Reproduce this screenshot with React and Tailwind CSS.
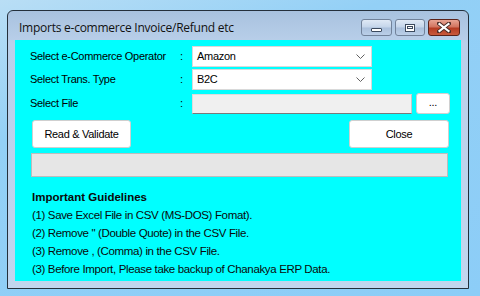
export default function App() {
  const ui = "font-['Liberation_Sans',Arial,sans-serif] text-[11px] text-black tracking-[-0.3px]";
  const lines = [
    '(1) Save Excel File in CSV (MS-DOS) Fomat).',
    '(2) Remove " (Double Quote) in the CSV File.',
    '(3) Remove , (Comma) in the CSV File.',
    '(3) Before Import, Please take backup of Chanakya ERP Data.',
  ];

  return (
    <div className="w-[480px] h-[296px] overflow-hidden bg-[linear-gradient(160deg,#b9def5_0%,#93d0f6_30%,#8ccdf7_100%)] pt-[10px] pl-[7px]">
      {/* Window */}
      <div className="w-[462px] h-[279px] border border-[#24303c] rounded-t-[6px] bg-[linear-gradient(180deg,#a8c2df_0%,#bad0ea_12%,#c1d6ee_100%)] flex flex-col">
        {/* Title bar */}
        <div className="h-[29px] flex items-start pl-[11px] pr-[8px]">
          <span className="mt-[10px] font-['Open_Sans',sans-serif] text-[12px] leading-[14px] text-[#111] tracking-[-0.25px]">
            Imports e-commerce Invoice/Refund etc
          </span>
          <div className="ml-auto mt-[8px] flex gap-[3px]">
            <div className="w-[31px] h-[17px] rounded-[3px] border border-[#71829a] bg-[linear-gradient(180deg,#dfe9f5_0%,#c4d5ea_48%,#aac0dc_52%,#bacfe8_100%)] flex items-center justify-center">
              <div className="w-[11px] h-[4px] mt-[4px] bg-white border border-[#3b4a5e] rounded-[1px]" />
            </div>
            <div className="w-[30px] h-[17px] rounded-[3px] border border-[#71829a] bg-[linear-gradient(180deg,#dfe9f5_0%,#c4d5ea_48%,#aac0dc_52%,#bacfe8_100%)] flex items-center justify-center">
              <div className="w-[10px] h-[8px] border border-[#3b4a5e] bg-white flex items-center justify-center">
                <div className="w-[6px] h-[3px] border border-[#3b4a5e]" />
              </div>
            </div>
            <div className="w-[32px] h-[17px] rounded-[3px] border border-[#5b2219] bg-[linear-gradient(180deg,#e8a493_0%,#d27560_45%,#b53b22_55%,#c85a3c_100%)] flex items-center justify-center">
              <svg width="14" height="11" viewBox="0 0 14 11">
                <path d="M2 1.5 L12 9.5 M12 1.5 L2 9.5" stroke="#4a2b26" strokeWidth="4" strokeLinecap="square" />
                <path d="M2.5 2 L11.5 9 M11.5 2 L2.5 9" stroke="#ffffff" strokeWidth="2.2" strokeLinecap="square" />
              </svg>
            </div>
          </div>
        </div>

        {/* Client area */}
        <div className={`mx-[7px] h-[241px] bg-[#00ffff] pt-[6px] pl-[15px] ${ui}`}>
          <div className="flex items-center h-[21px]">
            <span className="w-[150px]">Select e-Commerce Operator</span>
            <span className="w-[12px]">:</span>
            <div className="w-[180px] h-[21px] bg-white border border-[#d9d9d9] flex items-center pl-[4px] pr-[6px]">
              <span>Amazon</span>
              <svg className="ml-auto" width="9" height="5" viewBox="0 0 9 5">
                <path d="M0.5 0.5 L4.5 4.5 L8.5 0.5" fill="none" stroke="#606060" strokeWidth="1" />
              </svg>
            </div>
          </div>
          <div className="flex items-center h-[21px] mt-[2px]">
            <span className="w-[150px]">Select Trans. Type</span>
            <span className="w-[12px]">:</span>
            <div className="w-[180px] h-[21px] bg-white border border-[#d9d9d9] flex items-center pl-[4px] pr-[6px]">
              <span>B2C</span>
              <svg className="ml-auto" width="9" height="5" viewBox="0 0 9 5">
                <path d="M0.5 0.5 L4.5 4.5 L8.5 0.5" fill="none" stroke="#606060" strokeWidth="1" />
              </svg>
            </div>
          </div>
          <div className="flex items-center h-[21px] mt-[3px]">
            <span className="w-[150px]">Select File</span>
            <span className="w-[12px]">:</span>
            <div className="w-[220px] h-[20px] bg-[#f0f0f0] border border-[#dcdcdc] border-b-[#7a7a7a] border-r-[#c8c8c8]" />
            <div className="ml-[4px] w-[34px] h-[21px] bg-white border border-[#d0d0d0] rounded-[3px] flex items-center justify-center leading-none pb-[2px]">
              ...
            </div>
          </div>

          <div className="flex mt-[6px] pl-[2px] w-[419px]">
            <div className="w-[99px] h-[28px] bg-white border border-[#cfcfcf] rounded-[3px] flex items-center justify-center">
              Read &amp; Validate
            </div>
            <div className="ml-auto w-[100px] h-[28px] bg-white border border-[#cfcfcf] rounded-[3px] flex items-center justify-center">
              Close
            </div>
          </div>

          <div className="mt-[5px] ml-[1px] w-[417px] h-[24px] bg-[#e6e6e6] border border-[#bcbcbc]" />

          <div className="mt-[11px] pl-[2px] text-[11.5px] leading-[18px] text-[#0a0a0a] tracking-[-0.35px]">
            <div className="font-bold tracking-normal">Important Guidelines</div>
            {lines.map((l, i) => (
              <div key={i}>{l}</div>
            ))}
          </div>
        </div>
      </div>
    </div>
  );
}
